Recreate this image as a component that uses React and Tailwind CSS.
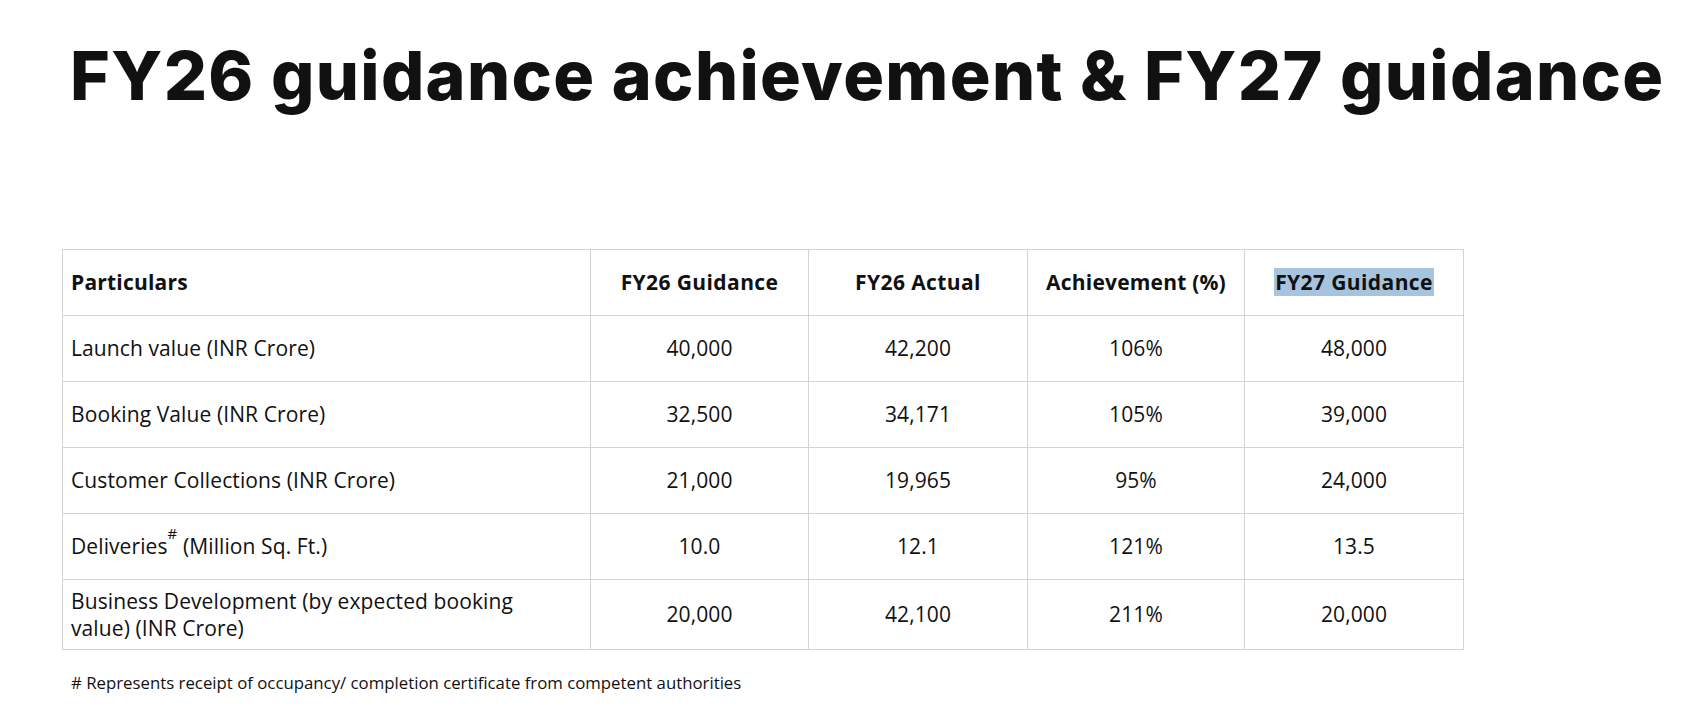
import React from "react";

const rows = [
  { label: "Launch value (INR Crore)", g26: "40,000", a26: "42,200", ach: "106%", g27: "48,000" },
  { label: "Booking Value (INR Crore)", g26: "32,500", a26: "34,171", ach: "105%", g27: "39,000" },
  { label: "Customer Collections (INR Crore)", g26: "21,000", a26: "19,965", ach: "95%", g27: "24,000" },
  { label: "deliveries", g26: "10.0", a26: "12.1", ach: "121%", g27: "13.5" },
  { label: "Business Development (by expected booking value) (INR Crore)", g26: "20,000", a26: "42,100", ach: "211%", g27: "20,000" },
];

function App() {
  return (
    <div className="w-[1689px] h-[715px] bg-white text-[#111]">
      {/* Title */}
      <h1
        className="pl-[70px] pt-[37px] text-[68px] leading-[76px] font-extrabold tracking-[1.35px] whitespace-nowrap"
        style={{ fontFamily: "Inter, 'Liberation Sans', sans-serif" }}
      >
        FY26 guidance achievement &amp; FY27 guidance
      </h1>

      <div className="pl-[62px] pt-[136px]" style={{ fontFamily: "'Open Sans', 'Noto Sans', sans-serif" }}>
        <table className="border-collapse text-[21px] leading-[27px] tracking-[0.1px]">
          <thead>
            <tr className="h-[66px]">
              <th className="w-[528px] border border-[#d4d4d4] px-[8px] text-left font-bold tracking-[0.2px]">Particulars</th>
              <th className="w-[218px] border border-[#d4d4d4] text-center font-bold tracking-[0.4px]">FY26 Guidance</th>
              <th className="w-[219px] border border-[#d4d4d4] text-center font-bold tracking-[0.4px]">FY26 Actual</th>
              <th className="w-[217px] border border-[#d4d4d4] text-center font-bold tracking-[0.2px]">Achievement (%)</th>
              <th className="w-[219px] border border-[#d4d4d4] text-center font-bold tracking-[0.4px]">
                <span className="bg-[#a6c4dd] px-[1px]">FY27 Guidance</span>
              </th>
            </tr>
          </thead>
          <tbody>
            {rows.map((r, i) => (
              <tr key={i} className={i === 4 ? "h-[70px]" : "h-[66px]"}>
                <td className="border border-[#d4d4d4] px-[8px] text-left">
                  {r.label === "deliveries" ? (
                    <>
                      Deliveries<sup className="text-[15px] align-[8px]">#</sup> (Million Sq. Ft.)
                    </>
                  ) : (
                    <span className={i === 4 ? "block w-[475px]" : ""}>{r.label}</span>
                  )}
                </td>
                <td className="border border-[#d4d4d4] text-center">{r.g26}</td>
                <td className="border border-[#d4d4d4] text-center">{r.a26}</td>
                <td className="border border-[#d4d4d4] text-center">{r.ach}</td>
                <td className="border border-[#d4d4d4] text-center">{r.g27}</td>
              </tr>
            ))}
          </tbody>
        </table>
        <p className="pl-[9px] pt-[20px] text-[16.8px]">
          # Represents receipt of occupancy/ completion certificate from competent authorities
        </p>
      </div>
    </div>
  );
}

export default App;
